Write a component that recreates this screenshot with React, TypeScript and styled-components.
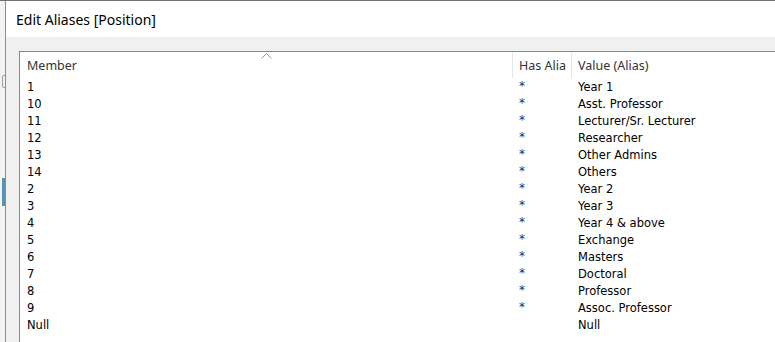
import React from 'react';
import styled, { createGlobalStyle } from 'styled-components';

interface AliasRow {
  member: string;
  hasAlias: boolean;
  value: string;
}

const ROWS: AliasRow[] = [
  { member: '1', hasAlias: true, value: 'Year 1' },
  { member: '10', hasAlias: true, value: 'Asst. Professor' },
  { member: '11', hasAlias: true, value: 'Lecturer/Sr. Lecturer' },
  { member: '12', hasAlias: true, value: 'Researcher' },
  { member: '13', hasAlias: true, value: 'Other Admins' },
  { member: '14', hasAlias: true, value: 'Others' },
  { member: '2', hasAlias: true, value: 'Year 2' },
  { member: '3', hasAlias: true, value: 'Year 3' },
  { member: '4', hasAlias: true, value: 'Year 4 & above' },
  { member: '5', hasAlias: true, value: 'Exchange' },
  { member: '6', hasAlias: true, value: 'Masters' },
  { member: '7', hasAlias: true, value: 'Doctoral' },
  { member: '8', hasAlias: true, value: 'Professor' },
  { member: '9', hasAlias: true, value: 'Assoc. Professor' },
  { member: 'Null', hasAlias: false, value: 'Null' },
];

const GlobalStyle = createGlobalStyle`
  html, body {
    margin: 0;
    padding: 0;
    background: #f0f0f0;
    overflow: hidden;
  }
`;

function App() {
  return (
    <>
      <GlobalStyle />
      <Screen>
        <Backdrop>
          <BackdropIcon />
          <BackdropTab />
        </Backdrop>
        <Dialog>
          <TitleBar>Edit Aliases [Position]</TitleBar>
          <DialogBody>
            <ListBox>
              <HeaderRow>
                <HeaderCell width={492} first>
                  Member
                  <SortArrow width="11" height="6" viewBox="0 0 11 6">
                    <path d="M0.5 5.5 L5.5 0.5 L10.5 5.5" fill="none" stroke="#9a9a9a" strokeWidth="1" />
                  </SortArrow>
                </HeaderCell>
                {/* column is too narrow, Windows clips the caption */}
                <HeaderCell width={59}>Has Alia</HeaderCell>
                <HeaderCell>Value (Alias)</HeaderCell>
              </HeaderRow>
              {ROWS.map((row) => (
                <Row key={row.member}>
                  <Cell width={492}>{row.member}</Cell>
                  <Cell width={59}>{row.hasAlias && <Star>*</Star>}</Cell>
                  <Cell>{row.value}</Cell>
                </Row>
              ))}
            </ListBox>
          </DialogBody>
        </Dialog>
      </Screen>
    </>
  );
}

const Screen = styled.div`
  display: flex;
  width: 775px;
  height: 342px;
  border-top: 1px solid #707070;
  box-sizing: border-box;
`;

const Backdrop = styled.div`
  width: 5px;
  flex-shrink: 0;
  display: flex;
  flex-direction: column;
  background: #f3f3f3;
`;

const BackdropIcon = styled.div`
  margin-top: 74px;
  margin-left: 2px;
  width: 6px;
  height: 13px;
  border: 1px solid #9c9c9c;
  border-radius: 2px;
  box-sizing: border-box;
`;

const BackdropTab = styled.div`
  margin-top: 90px;
  margin-left: 2px;
  width: 3px;
  height: 28px;
  background: #5b8fae;
`;

const Dialog = styled.div`
  flex: 1;
  display: flex;
  flex-direction: column;
  border-left: 1px solid #8c8c8c;
  min-width: 0;
`;

const TitleBar = styled.div`
  height: 36px;
  flex-shrink: 0;
  display: flex;
  align-items: center;
  padding-left: 10px;
  background: #ffffff;
  font-family: 'Noto Sans', sans-serif;
  font-size: 14px;
  color: #000;
`;

const DialogBody = styled.div`
  flex: 1;
  display: flex;
  padding: 14px 0 0 13px;
  background: #f0f0f0;
  min-height: 0;
`;

const ListBox = styled.div`
  flex: 1;
  display: flex;
  flex-direction: column;
  background: #ffffff;
  border-top: 1px solid #828790;
  border-left: 1px solid #828790;
  overflow: hidden;
`;

const HeaderRow = styled.div`
  display: flex;
  height: 26px;
  flex-shrink: 0;
`;

const HeaderCell = styled.div<{ width?: number; first?: boolean }>`
  position: relative;
  display: flex;
  align-items: center;
  box-sizing: border-box;
  ${({ width }) => (width ? `width: ${width}px; flex-shrink: 0;` : 'flex: 1;')}
  padding-left: ${({ first }) => (first ? '7px' : '6px')};
  border-left: ${({ first }) => (first ? 'none' : '1px solid #e5e5e5')};
  font-family: 'Noto Sans', sans-serif;
  font-size: 12.5px;
  color: #333;
  white-space: nowrap;
`;

const SortArrow = styled.svg`
  position: absolute;
  top: 1px;
  left: 241px;
`;

const Row = styled.div`
  display: flex;
  height: 17px;
  flex-shrink: 0;
`;

const Cell = styled.div<{ width?: number }>`
  display: flex;
  align-items: center;
  box-sizing: border-box;
  ${({ width }) => (width ? `width: ${width}px; flex-shrink: 0;` : 'flex: 1;')}
  padding-left: 7px;
  font-family: 'DejaVu Sans', sans-serif;
  font-size: 11.5px;
  color: #000;
  white-space: nowrap;
`;

const Star = styled.span`
  color: #172f66;
  font-size: 12px;
  position: relative;
  top: -1px;
`;

export default App;
